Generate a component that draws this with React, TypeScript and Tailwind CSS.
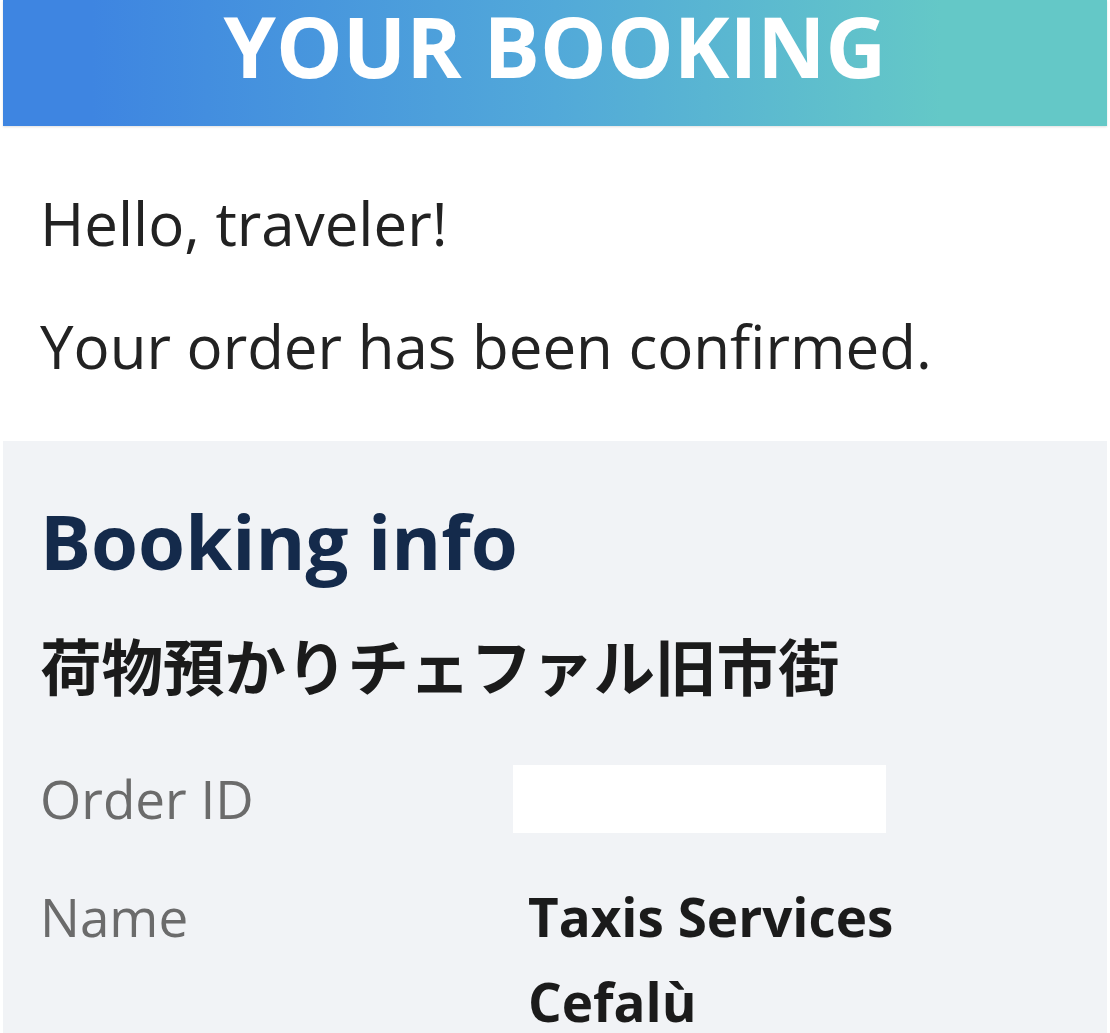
import React from 'react'

const sans = "font-['Open_Sans','Noto_Sans_CJK_JP',sans-serif]"

interface InfoRow {
    label: string
    value?: string[]
}

const rows: InfoRow[] = [
    { label: 'Order ID' },
    { label: 'Name', value: ['Taxis Services', 'Cefalù'] },
]

export default function App() {
    return (
        <div className={`${sans} min-h-[1033px] overflow-hidden bg-white px-[3px]`}>
            <header className="h-[126px] bg-[linear-gradient(to_right,#3e85e1_8%,#52a9d9_50%,#64c8c7_85%)] text-center shadow-[0_1px_2px_rgba(0,0,0,0.12)]">
                <h1 className="text-[84px] font-bold leading-[92px] text-white">YOUR BOOKING</h1>
            </header>

            <div className="pl-[37px] pt-[52px] text-[60px] leading-[90px] text-[#222]">
                <p>Hello, traveler!</p>
                <p className="mt-[33px]">Your order has been confirmed.</p>
            </div>

            <section className="mt-[50px] bg-[#f1f3f6] pl-[37px] pt-[58px] pb-10">
                <h2 className="text-[76px] font-bold leading-[84px] text-[#142a4b]">Booking info</h2>
                <h3 className="mt-[42px] text-[61.5px] font-bold leading-[85px] text-[#1b1b1b]">荷物預かりチェファル旧市街</h3>

                <div className="mt-[46px] flex flex-col gap-[33px]">
                    {rows.map((row) => (
                        <div key={row.label} className="grid grid-cols-[488px_1fr] text-[53px] leading-[85px]">
                            <div className="text-[#6b6b6b]">{row.label}</div>
                            {row.value ? (
                                <div className="font-bold text-[#1b1b1b]">
                                    {row.value.map((line) => (
                                        <div key={line}>{line}</div>
                                    ))}
                                </div>
                            ) : (
                                <div className="flex items-center">
                                    <div className="-ml-[15px] h-[68px] w-[373px] bg-white" />
                                </div>
                            )}
                        </div>
                    ))}
                </div>
            </section>
        </div>
    )
}
